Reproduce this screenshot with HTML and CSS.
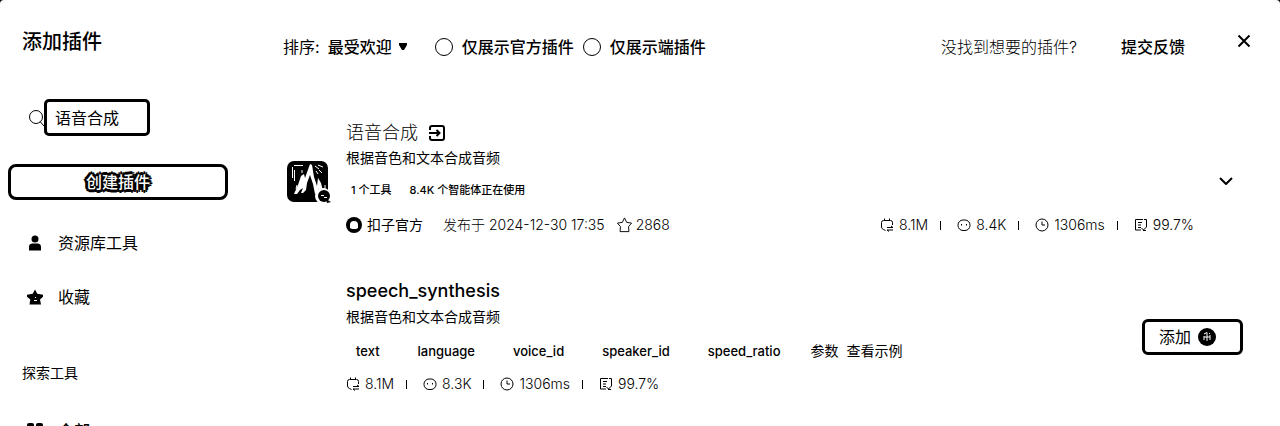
FILE: index.html
```html
<!DOCTYPE html>
<html lang="zh-CN">
<head>
<meta charset="utf-8">
<title>添加插件</title>
<link rel="stylesheet" href="styles.css">
</head>
<body>
<svg class="defs" aria-hidden="true">
  <symbol id="calls" viewBox="0 0 14 14"><path d="M12.500 7V4.500a2 2 0 0 0-2-2h-7a2 2 0 0 0-2 2V9a3 3 0 0 0 2 2.500l2 1M4.500 .5v2M9.500 .5v2M7 9.500h6M11 8l2 1.500M13 12H7l2 1.500"/></symbol>
  <symbol id="bots" viewBox="0 0 14 14"><rect x="1" y="2" width="12" height="10.500" rx="5"/><path d="M4.500 6v1.500M9.500 6v1.500"/></symbol>
  <symbol id="clock" viewBox="0 0 14 14"><circle cx="7" cy="7" r="6"/><path d="M7 3.500V7h3"/></symbol>
  <symbol id="rate" viewBox="0 0 14 14"><path d="M9 1.500H1.500V12H7M4 4.500h4M4 7h3M4 9.500h3M10 1.500h2.500V9l-3 3-2-2M9 12.500h3"/></symbol>
  <symbol id="star" viewBox="0 0 18 18"><path d="M9 1.500l2.300 4.700 5.200.8-3.200 3.700.4 5.300H4.300l.4-5.300L1.500 7l5.200-.8z"/></symbol>
</svg>
<div class="dialog">
  <aside class="sidebar">
    <h1 class="title">添加插件</h1>
    <label class="search">
      <svg class="search-icon" viewBox="0 0 16 18"><circle cx="8" cy="8" r="6.500"/><path d="M12 12.500L16 17"/></svg>
      <input class="search-input" type="text" value="语音合成" aria-label="搜索">
    </label>
    <button class="create" type="button"><span class="create-text">创建插件</span></button>
    <nav class="nav">
      <a class="nav-item" href="#"><svg class="nav-icon" viewBox="0 0 16 16"><circle cx="8" cy="4" r="3.500"/><path d="M2 15.500V12a3.500 3.500 0 0 1 3-3.500h6a3.500 3.500 0 0 1 3 3.500v3.500z"/></svg>资源库工具</a>
      <a class="nav-item" href="#"><svg class="nav-icon" viewBox="0 0 16 16"><path d="M8 .5l2.300 4.200 5.700 1v2l-3 2.800 1 5H2.500l.8-5L0 7.700v-2l5.700-1z"/><path class="hole" d="M8 8h1v1H8zM7 11h3v1H7z"/></svg>收藏</a>
    </nav>
    <h2 class="group">探索工具</h2>
    <nav class="nav">
      <a class="nav-item nav-all" href="#"><svg class="nav-icon" viewBox="0 0 16 16"><rect width="7" height="7" rx="2"/><rect x="9" width="7" height="7" rx="2"/><rect y="9" width="7" height="7" rx="2"/><rect x="9" y="9" width="7" height="7" rx="2"/></svg>全部</a>
    </nav>
  </aside>
  <main class="main">
    <header class="toolbar">
      <span class="sort-label">排序:</span>
      <button class="sort" type="button">最受欢迎<svg class="caret" viewBox="0 0 8 8"><path d="M0 0h8v2L5 7H3L0 2z"/></svg></button>
      <label class="filter"><input class="radio" type="radio" name="filter">仅展示官方插件</label>
      <label class="filter"><input class="radio" type="radio" name="filter">仅展示端插件</label>
      <span class="hint">没找到想要的插件?</span>
      <a class="feedback" href="#">提交反馈</a>
      <button class="close" type="button" aria-label="关闭"><svg viewBox="0 0 14 14"><path d="M1.500 1.500l11 11M12.500 1.500l-11 11"/></svg></button>
    </header>

    <section class="plugin">
      <svg class="logo" viewBox="0 0 44 44">
        <rect width="41" height="41" rx="7"/>
        <path class="white" d="M23 3l2 1 2 12 3 9 1-8 3 5 2 8-2 2-3-4v4l-3 1-2-10-3-9-3 8-1 7-3 3h-2l2-5-3 2-3 4H7l4-9 3-9 3-2 1 4z"/>
        <path class="scratch" d="M5.500 17V6M7.500 20V9M7 4.500h9M15 9v3M28 5l4 3M31 4l5 2M32 9l3 3M29 10l2 3M9 28l1-4M38 24v4"/>
        <circle class="white" cx="36" cy="35" r="8"/>
        <circle cx="37" cy="35" r="6"/><path d="M39 38l5 3-4 1z"/>
        <path class="white" d="M34 34h3v1h-3zM37 36h3v1h-3z"/>
      </svg>
      <div class="body">
        <h2 class="name">语音合成<svg class="enter" viewBox="0 0 16 16"><path d="M1 5V3q0-2 2-2h10q2 0 2 2v10q0 2-2 2H3q-2 0-2-2v-2M0 8h10M7.500 5L10.500 8l-3 3"/></svg></h2>
        <p class="desc">根据音色和文本合成音频</p>
        <div class="tags"><span>1 个工具</span><span>8.4K 个智能体正在使用</span></div>
        <div class="meta">
          <svg class="avatar" viewBox="0 0 16 16"><circle cx="8" cy="8" r="8"/><path class="white" d="M4 11V8a4 4 0 0 1 8 0v3l-2 1H6z"/></svg>
          <span class="author">扣子官方</span>
          <span class="date">发布于 2024-12-30 17:35</span>
          <svg class="star"><use href="#star"/></svg>
          <span>2868</span>
          <div class="stats stats-end">
            <span class="stat"><svg><use href="#calls"/></svg>8.1M</span>
            <span class="stat"><svg><use href="#bots"/></svg>8.4K</span>
            <span class="stat"><svg><use href="#clock"/></svg>1306ms</span>
            <span class="stat"><svg><use href="#rate"/></svg>99.7%</span>
          </div>
        </div>
      </div>
      <button class="toggle" type="button" aria-label="收起"><svg viewBox="0 0 14 8"><path d="M1 1l6 6 6-6"/></svg></button>
    </section>

    <section class="tool">
      <div class="body">
        <h3 class="tool-name">speech_synthesis</h3>
        <p class="desc">根据音色和文本合成音频</p>
        <div class="params">
          <span>text</span><span>language</span><span>voice_id</span><span>speaker_id</span><span>speed_ratio</span>
          <a class="link" href="#">参数</a><a class="link" href="#">查看示例</a>
        </div>
        <div class="stats">
          <span class="stat"><svg><use href="#calls"/></svg>8.1M</span>
          <span class="stat"><svg><use href="#bots"/></svg>8.3K</span>
          <span class="stat"><svg><use href="#clock"/></svg>1306ms</span>
          <span class="stat"><svg><use href="#rate"/></svg>99.7%</span>
        </div>
      </div>
      <button class="add" type="button">添加<svg class="coin" viewBox="0 0 18 18"><circle cx="9" cy="9" r="9"/><path d="M6 6l3-1.500M9 4.500V13M6 8v4M12 7v5M6 9h6M11 5l1 1"/></svg></button>
    </section>
  </main>
</div>
</body>
</html>
```

FILE: styles.css
```css
* { box-sizing: border-box; }

body {
  margin: 0;
  background: #000;
  color: #000;
  font: 16px/24px Inter, "Noto Sans CJK SC", sans-serif;
}

h1, h2, h3, p { margin: 0; font-weight: 400; }
a { color: inherit; text-decoration: none; }
button { padding: 0; border: 0; background: none; color: inherit; font: inherit; }
svg { display: block; flex: none; }
.defs { position: absolute; width: 0; height: 0; }
.white { fill: #fff; }

.dialog {
  display: flex;
  height: 100vh;
  overflow: hidden;
  border-radius: 4px 4px 0 0;
  background: #fff;
}

/* Sidebar */
.sidebar { flex: none; width: 236px; padding: 28px 8px 0; }
.title { padding-left: 14px; font-size: 20px; line-height: 28px; font-weight: 500; }
.search { display: flex; align-items: center; margin: 43px 0 28px; padding-left: 20px; }
.search-icon { width: 16px; height: 18px; fill: none; stroke: #000; }
.search-input {
  width: 106px;
  height: 37px;
  padding: 0 8px 2px;
  border: 3px solid #000;
  border-radius: 5px;
  background: #fff;
  color: #000;
  font: inherit;
}
.create {
  display: block;
  width: 100%;
  height: 36px;
  border: 3px solid #000;
  border-radius: 8px;
  line-height: 28px;
}
.create-text {
  color: #fff;
  font-weight: 500;
  text-shadow: 2px 0 #000, -2px 0 #000, 0 2px #000, 0 -2px #000, 2px 2px #000, -2px 2px #000, 2px -2px #000, -2px -2px #000, 3px 0 #000, -3px 0 #000, 0 3px #000, 0 -3px #000, 0 0 2px #000;
}
.nav { margin-top: 16px; }
.nav-item { display: flex; align-items: center; gap: 15px; height: 54px; padding-left: 19px; }
.nav-icon { width: 16px; height: 16px; }
.hole { fill: #fff; }
.group { margin-top: 37px; padding-left: 14px; font-size: 14px; }
.group + .nav { margin-top: 19px; }
.nav-all { font-weight: 500; }

/* Main column */
.main { flex: 1; min-width: 0; padding: 29px 30px 0 47px; }
.toolbar { display: flex; align-items: center; height: 36px; font-weight: 500; }
.sort-label { font-weight: 400; }
.sort { display: flex; align-items: center; gap: 7px; margin: 0 28px 0 8px; }
.caret { width: 8px; height: 8px; }
.filter { display: flex; align-items: center; gap: 9px; margin-right: 9px; }
.radio {
  appearance: none;
  width: 18px;
  height: 18px;
  margin: 0;
  border: 1px solid #000;
  border-radius: 50%;
}
.hint { margin-left: auto; font-weight: 300; }
.feedback { margin: 0 52px 0 44px; }
.close { align-self: flex-start; padding-top: 5px; }
.close svg { width: 14px; height: 14px; fill: none; stroke: #000; stroke-width: 2; }
.toolbar { margin-right: -1px; }

.plugin { display: flex; align-items: center; gap: 15px; margin-top: 56px; padding-left: 4px; }
.logo { width: 44px; height: 44px; margin-top: 8px; }
.scratch { fill: none; stroke: #fff; }
.body { flex: 1; min-width: 0; }
.name { display: flex; align-items: center; gap: 11px; font-size: 18px; font-weight: 300; }
.enter { width: 16px; height: 16px; fill: none; stroke: #000; stroke-width: 2; }
.desc { padding-top: 1px; font-size: 14px; }
.tags { display: flex; gap: 18px; margin: 8px 0 11px; padding-left: 5px; font-size: 11px; font-weight: 500; }
.meta { display: flex; align-items: center; font-size: 14px; font-weight: 300; }
.avatar { width: 16px; height: 16px; margin-right: 5px; }
.author { margin-right: 20px; font-weight: 400; }
.date { margin-right: 11px; }
.star { width: 17px; height: 18px; margin-right: 3px; fill: none; stroke: #000; }
.stats { display: flex; font-size: 14px; font-weight: 300; }
.stats-end { margin: 0 10px 0 auto; }
.stat { display: flex; align-items: center; gap: 5px; }
.stat svg { width: 14px; height: 14px; fill: none; stroke: #000; }
.stat + .stat::before { content: ""; width: 1px; height: 9px; margin: 0 11px 0 12px; background: #000; }
.toggle { margin: 4px 17px 0 0; }
.toggle svg { width: 14px; height: 8px; fill: none; stroke: #000; stroke-width: 2; }

.tool { display: flex; align-items: center; margin-top: 41px; padding: 0 7px 0 63px; }
.tool-name { font-size: 18px; line-height: 26px; font-weight: 500; }
.params { display: flex; gap: 38px; margin: 10px 0 9px; padding-left: 10px; font-size: 13px; font-weight: 500; }
.link { margin-left: -8px; font-size: 14px; font-weight: 400; }
.link + .link { margin-left: -30px; }
.add {
  display: flex;
  align-items: center;
  gap: 7px;
  height: 36px;
  padding: 0 24px 0 14px;
  border: 3px solid #000;
  border-radius: 6px;
}
.coin { width: 18px; height: 18px; }
.coin path { fill: none; stroke: #fff; }
```
